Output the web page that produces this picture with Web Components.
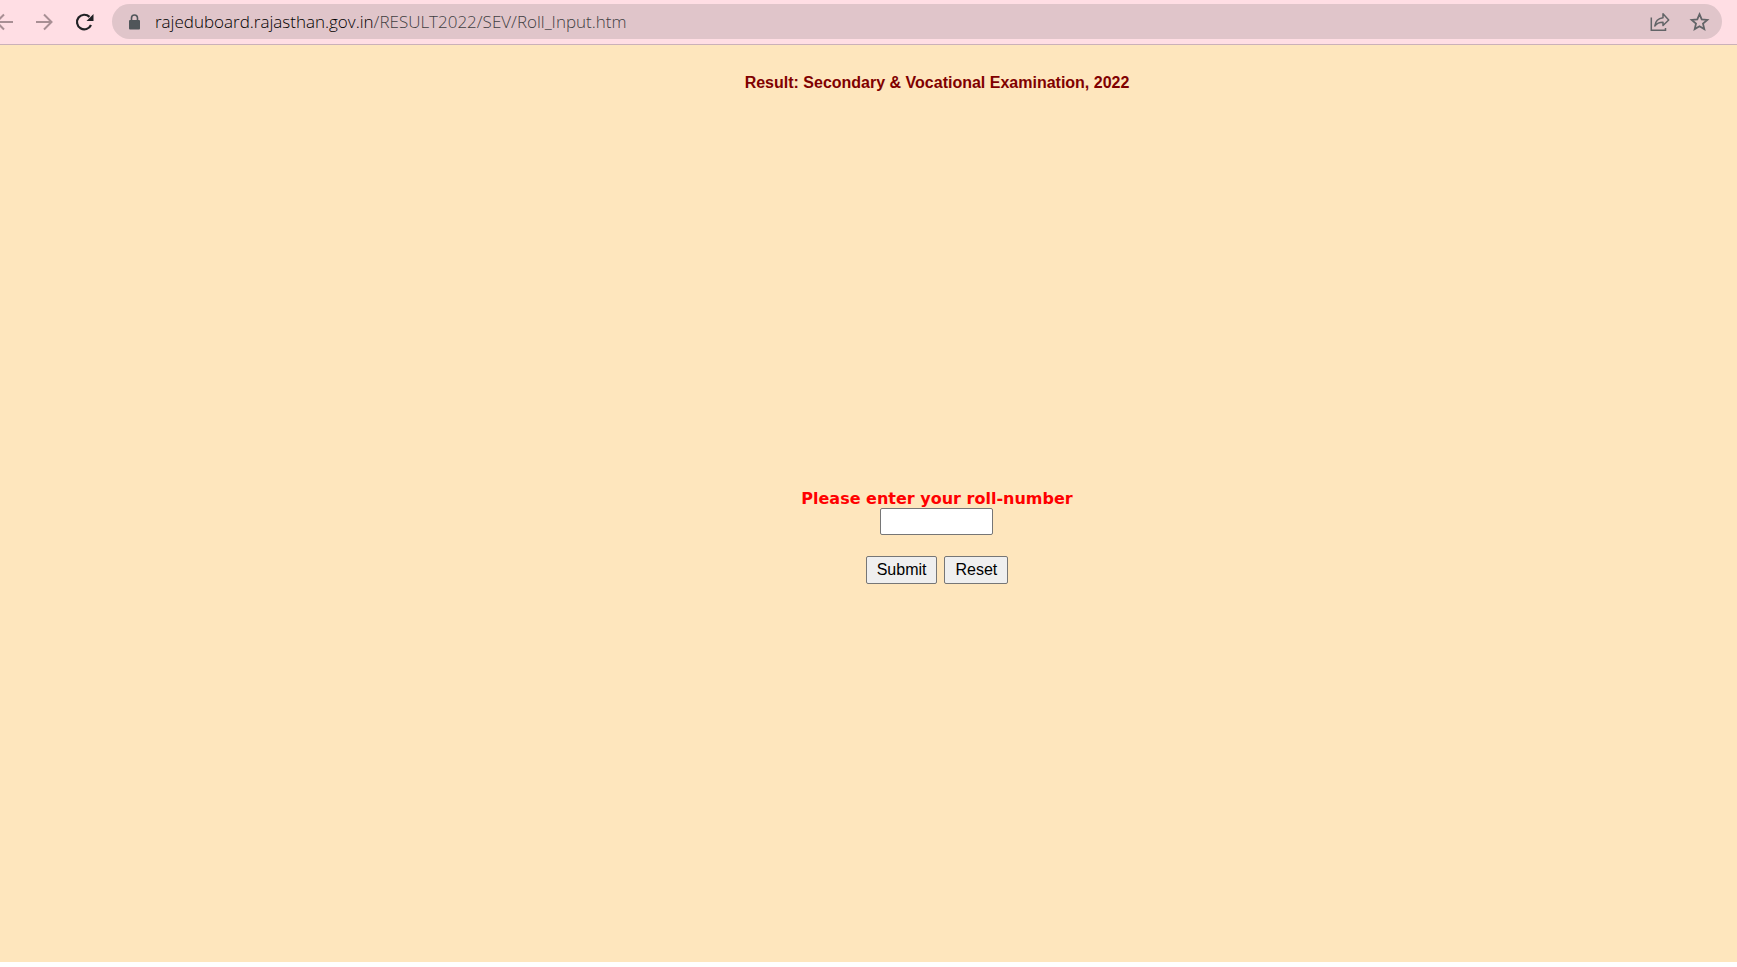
<!DOCTYPE html>
<html lang="en">
<head>
<meta charset="utf-8">
<title>Result: Secondary &amp; Vocational Examination, 2022</title>
<style>
  html{background:#fff}
  body{margin:0;min-height:100vh;display:flex;flex-direction:column}
  result-page{flex:1;margin-bottom:5px}
</style>
</head>
<body>
<browser-bar>
  <span slot="host">rajeduboard.rajasthan.gov.in</span>
  <span slot="path">/RESULT2022/SEV/Roll_Input.htm</span>
</browser-bar>
<result-page>
  <span slot="title">Result: Secondary &amp; Vocational Examination, 2022</span>
  <roll-form>Please enter your roll-number</roll-form>
</result-page>
<script>
class BrowserBar extends HTMLElement {
  constructor() { super(); this.attachShadow({ mode: "open" }); }
  connectedCallback() {
    this.shadowRoot.innerHTML = `
      <style>
        *,*::before,*::after{box-sizing:border-box}
        :host{display:flex;align-items:center;gap:16px;background:#ffdee4;border-bottom:1px solid #cbb1b9;padding:4px 15px 5px 0;font-family:"Open Sans","Noto Sans",sans-serif}
        button{border:0;padding:0;background:none;color:#202124;display:block;flex:0 0 auto}
        svg{display:block}
        nav{display:flex;gap:16px;margin-left:-8px}
        .off{color:#a88f94}
        .pill{flex:1;min-width:0;display:flex;align-items:center;height:35px;border-radius:18px;background:#e0c5ca;padding:0 10px}
        .lock{color:#50565a;margin-right:8px}
        a{flex:1;font-size:17px;font-weight:300;line-height:24px;color:#404042;text-decoration:none;white-space:nowrap}
        .host{color:#000}
        .tools{display:flex;gap:16px}
        .tools button{color:#626467}
      </style>
      <nav aria-label="History">
        <button class="off" aria-label="Back"><svg width="24" height="24" viewBox="0 0 24 24" fill="none" stroke="currentColor" stroke-width="2"><path d="M21 12H5M12 4.5L4.5 12l7.500 7.500"/></svg></button>
        <button class="off" aria-label="Forward"><svg width="24" height="24" viewBox="0 0 24 24" fill="none" stroke="currentColor" stroke-width="2"><path d="M4 12h15M12 4.500L19.500 12 12 19.500"/></svg></button>
        <button aria-label="Reload"><svg width="24" height="24" viewBox="0 0 24 24"><path fill="none" stroke="currentColor" stroke-width="2.200" d="M19 15a7.300 7.300 0 1 1-1.500-8.100"/><path fill="currentColor" d="M21.500 4v7h-7z"/></svg></button>
      </nav>
      <div class="pill">
        <svg class="lock" width="25" height="20" viewBox="0 0 25 20"><path fill="currentColor" d="M8 8h9q1 0 1 1V16.500q0 1-1 1H8q-1 0-1-1V9q0-1 1-1z"/><path fill="none" stroke="currentColor" stroke-width="1.600" d="M9.500 9V6a3 3 0 0 1 6 0V9"/></svg>
        <a href="#"><span class="host"><slot name="host"></slot></span><slot name="path"></slot></a>
        <div class="tools">
          <button aria-label="Share this page"><svg width="24" height="24" viewBox="0 0 24 24" fill="none" stroke="currentColor" stroke-width="1.500"><path d="M3.300 7.500v12.700H17.500V18"/><path stroke-linejoin="round" d="M15 3.800l5.700 6.200-5.700 5.500v-3.200c-3.500 0-6 .7-8.200 3.700.5-4.500 3.300-7.700 8.200-8.300z"/></svg></button>
          <button aria-label="Bookmark this page"><svg width="24" height="24" viewBox="0 0 24 24" fill="none" stroke="currentColor" stroke-width="1.800"><path d="M11.500 4.200l2.200 5.200 5.600.5-4.300 3.700 1.300 5.500-4.800-2.900-4.800 2.900 1.300-5.500-4.300-3.700 5.600-.5z"/></svg></button>
        </div>
      </div>`;
  }
}

class ResultPage extends HTMLElement {
  constructor() { super(); this.attachShadow({ mode: "open" }); }
  connectedCallback() {
    this.shadowRoot.innerHTML = `
      <style>
        :host{display:flex;flex-direction:column;background:#fee6bd;padding-left:137px;text-align:center}
        h1{margin:29px 0 0;font:bold 16px/18px "Liberation Sans",Arial,sans-serif;color:#800000}
        main{flex:1;display:flex;justify-content:center;align-items:center;padding-top:20px}
      </style>
      <h1><slot name="title"></slot></h1>
      <main><slot></slot></main>`;
  }
}

class RollForm extends HTMLElement {
  constructor() { super(); this.attachShadow({ mode: "open" }); }
  connectedCallback() {
    this.shadowRoot.innerHTML = `
      <style>
        *,*::before,*::after{box-sizing:border-box}
        :host{display:block}
        form{display:flex;flex-direction:column;align-items:center}
        label{font:bold 16px/18px "DejaVu Sans",Verdana,sans-serif;color:#f00}
        input,button{font:16px/18px "Liberation Sans",Arial,sans-serif;border:1px solid #767676;border-radius:2px;color:#000}
        input{width:113px;height:27px;padding:1px 2px;background:#fff}
        .row{display:flex;gap:7px;margin-top:21px}
        button{height:28px;padding:0 10px;background:#efefef}
      </style>
      <form>
        <label for="roll"><slot></slot></label>
        <input id="roll" name="roll" type="text" maxlength="7" autocomplete="off">
        <div class="row">
          <button type="submit">Submit</button>
          <button type="reset">Reset</button>
        </div>
      </form>`;
    this.shadowRoot.querySelector("form").addEventListener("submit", (e) => e.preventDefault());
  }
}

customElements.define("browser-bar", BrowserBar);
customElements.define("result-page", ResultPage);
customElements.define("roll-form", RollForm);
</script>
</body>
</html>
